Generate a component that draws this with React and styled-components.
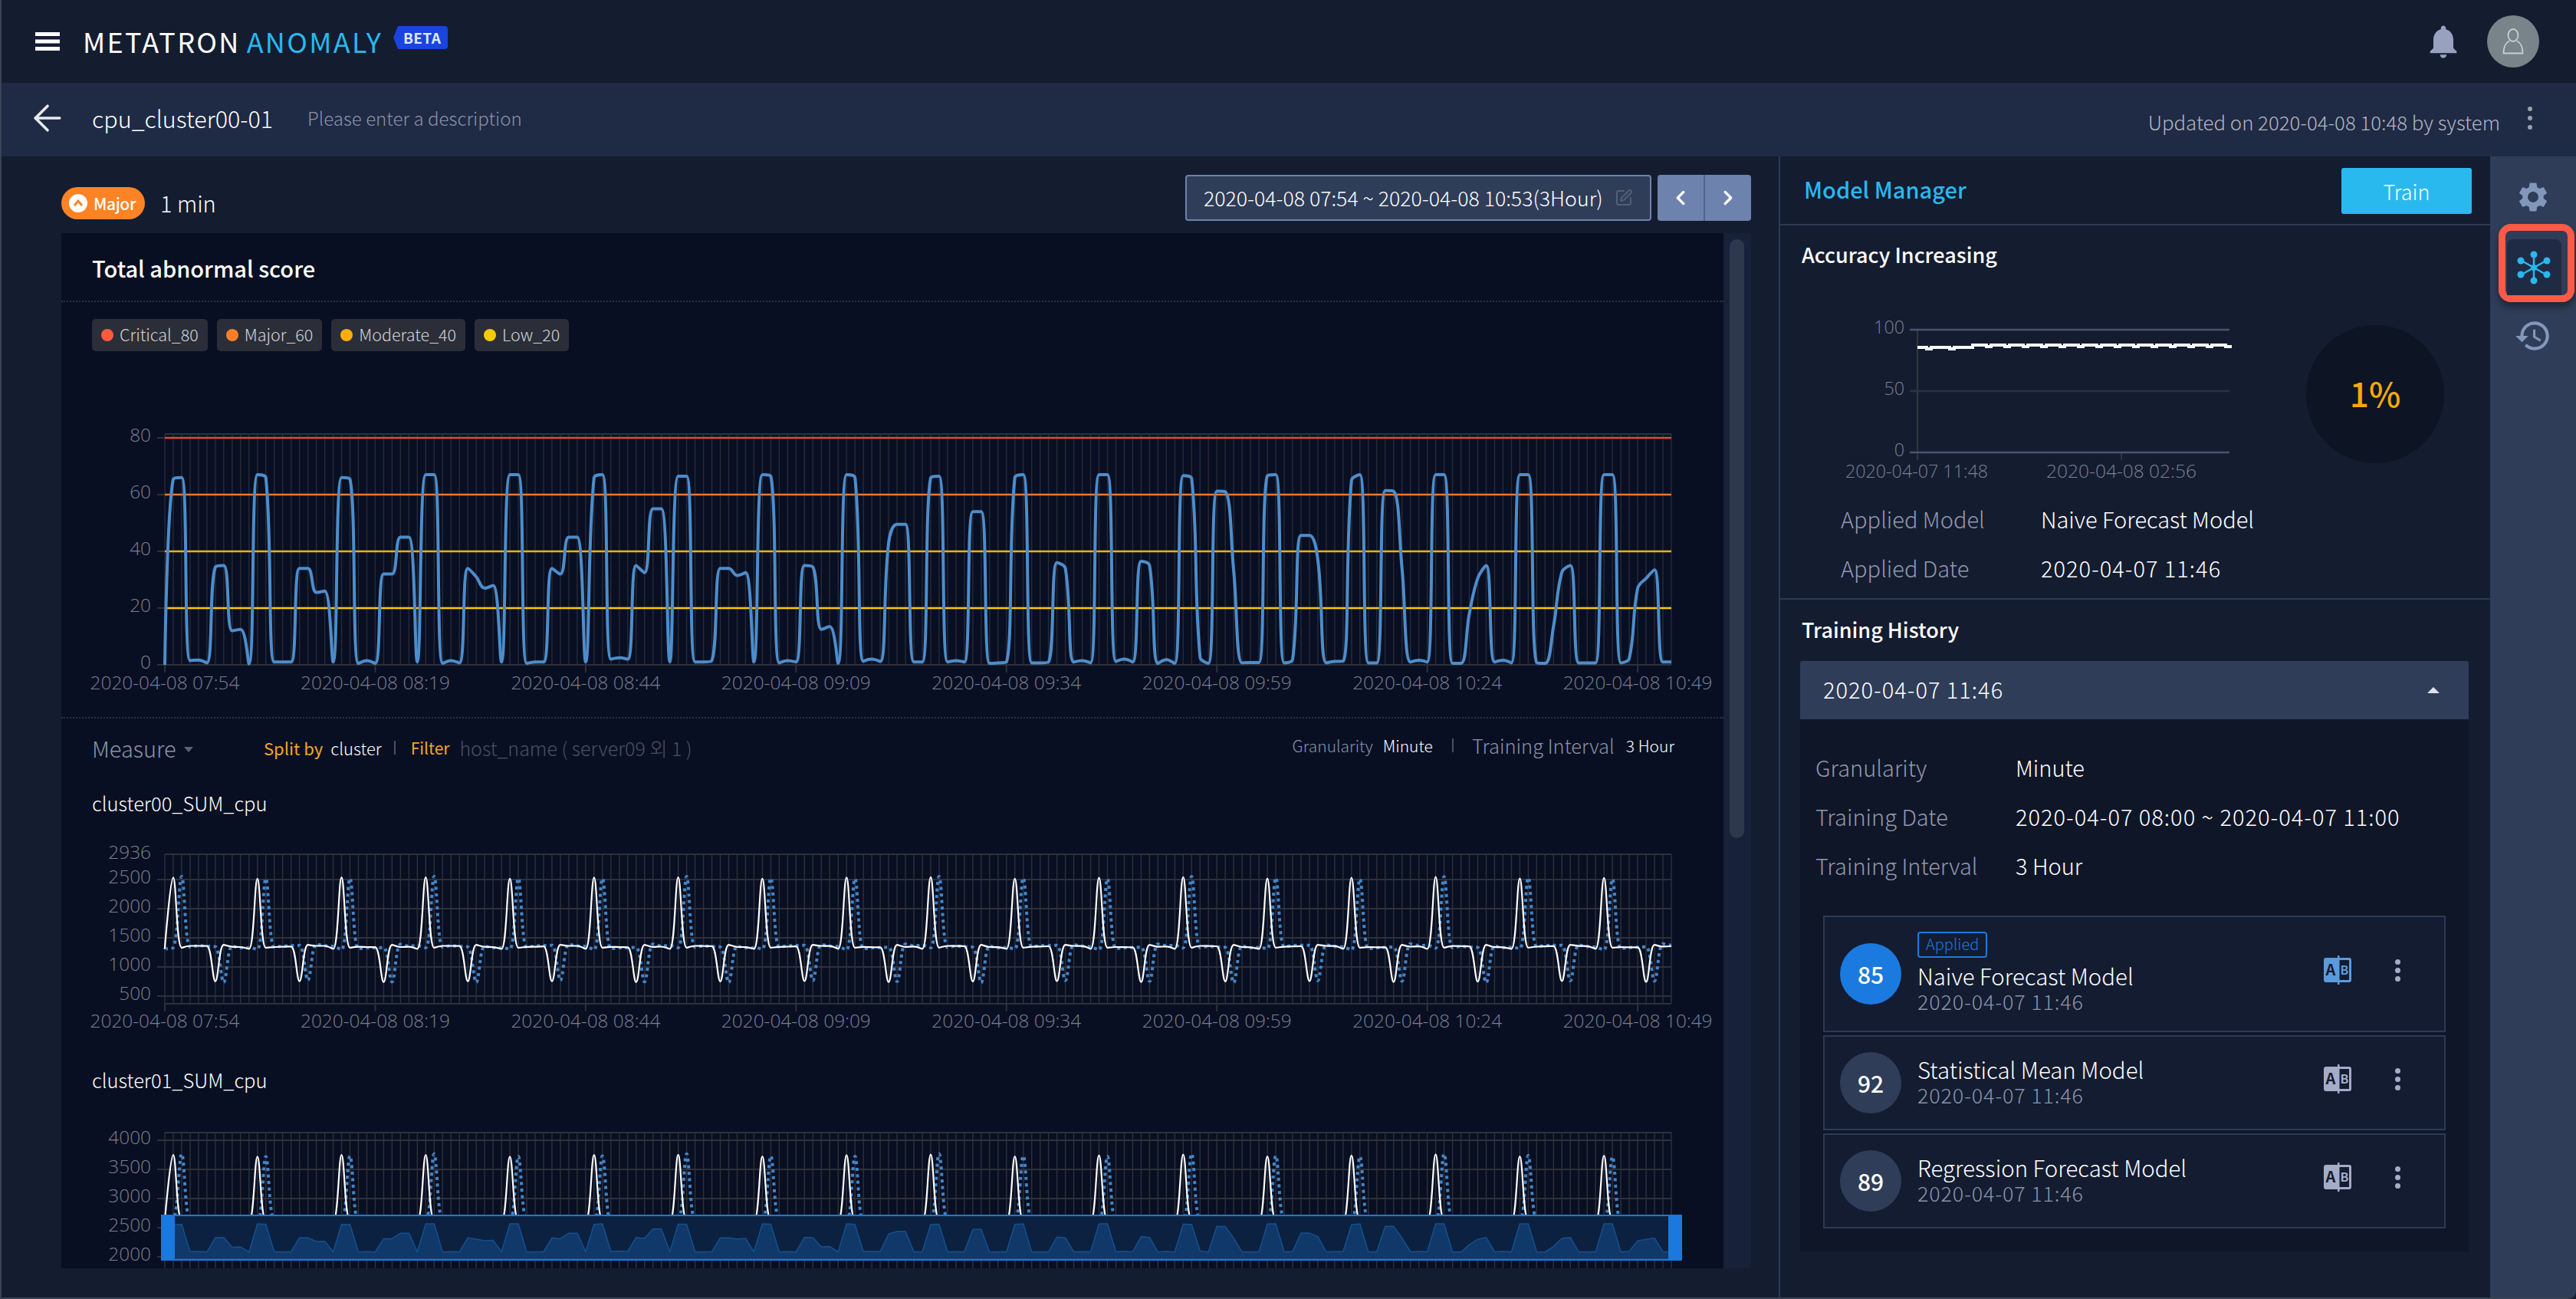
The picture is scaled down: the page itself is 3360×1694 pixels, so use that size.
import React from 'react';
import styled, { createGlobalStyle } from 'styled-components';
import { ArrowLeft, ChevronLeft, ChevronRight, SquarePen } from 'lucide-react';
import { MdHistory, MdNotifications, MdSettings } from 'react-icons/md';

const FONT = '"Noto Sans CJK KR", "Noto Sans", sans-serif';
const AXIS_FONT = '"Open Sans", "Noto Sans", sans-serif';

const SCORE = [
  0, 65.5, 66, 1.5, 1.7, 0.7, 34.5, 35, 12, 12.5,
  0.3, 67, 66, 1, 1, 1, 34, 34, 25.5, 26,
  1, 66, 65.5, 0.5, 1.5, 0.5, 32, 32, 45, 45,
  1, 67, 67, 0.5, 1.5, 0.7, 34, 31, 27, 28,
  1, 67, 67, 0.5, 1, 1, 34, 32, 45, 45,
  1, 66, 67, 2, 2.5, 2, 35, 32.5, 55, 55,
  1, 66.5, 66.5, 1, 1, 1.5, 34, 34, 31.5, 32.5,
  1, 67, 66.5, 0.7, 1.5, 1, 35, 34.5, 12.5, 13.5,
  0.5, 67, 66, 1.3, 2, 1.2, 43, 49.5, 49.5, 1,
  1, 66, 66.5, 1, 1.5, 1, 54, 54, 0.5, 0.7,
  1, 66, 67, 0.7, 0.7, 1, 36, 34, 1, 1.5,
  0.7, 67, 67, 1.2, 2, 1, 36.5, 35, 0.5, 1.8,
  0.5, 66.7, 65.7, 2.7, 0.5, 61.2, 61, 33, 0.7, 0.8,
  0.8, 66.7, 67, 0.7, 1.8, 45.6, 45.6, 37, 0.7, 1.2,
  1.3, 65, 67, 0.7, 0.7, 61.4, 61.2, 34, 1, 1.6,
  1, 67, 67, 0.5, 0.5, 18, 30.5, 35, 1, 1.6,
  0.7, 67, 67, 0.7, 0.5, 13.5, 32.7, 35, 0.7, 0.7,
  0.7, 67, 67, 0.7, 2.2, 27, 30.5, 33.5, 1, 1,
];

const STEP = 1965 / 179;
const AXIS_X = 135;
const TICKS = [0, 25, 50, 75, 100, 125, 150, 175];
const TICK_NAMES = ['07:54', '08:19', '08:44', '09:09', '09:34', '09:59', '10:24', '10:49'];

// same bezier construction the chart library uses for smooth lines
const smoothPath = (pts, smooth = 0.5) => {
  let d = `M${pts[0][0]} ${pts[0][1]}`;
  let cp0 = pts[0];
  for (let i = 1; i < pts.length; i++) {
    const [x, y] = pts[i];
    const [px, py] = pts[i - 1];
    const [nx, ny] = pts[i + 1] || pts[i];
    let cp1x = x;
    let cp1y = y;
    let nc = [x, y];
    if (i < pts.length - 1) {
      const prevLen = Math.hypot(x - px, y - py);
      const nextLen = Math.hypot(nx - x, ny - y);
      const ratio = nextLen / (nextLen + prevLen);
      let ncx = x + (nx - px) * smooth * ratio;
      let ncy = y + (ny - py) * smooth * ratio;
      ncx = Math.max(Math.min(ncx, Math.max(nx, x)), Math.min(nx, x));
      ncy = Math.max(Math.min(ncy, Math.max(ny, y)), Math.min(ny, y));
      cp1x = x - (ncx - x) * (prevLen / nextLen);
      cp1y = y - (ncy - y) * (prevLen / nextLen);
      cp1x = Math.max(Math.min(cp1x, Math.max(px, x)), Math.min(px, x));
      cp1y = Math.max(Math.min(cp1y, Math.max(py, y)), Math.min(py, y));
      ncx = x + (x - cp1x) * (nextLen / prevLen);
      ncy = y + (y - cp1y) * (nextLen / prevLen);
      nc = [ncx, ncy];
    }
    d += `C${cp0[0].toFixed(1)} ${cp0[1].toFixed(1)} ${cp1x.toFixed(1)} ${cp1y.toFixed(1)} ${x.toFixed(1)} ${y.toFixed(1)}`;
    cp0 = nc;
  }
  return d;
};

const wiggle = (i, amp) => Math.sin(i * 12.9898) * amp;

// one period of the measure series, repeated with a small jitter
const measureSeries = (peak, low, base, jitter) =>
  Array.from({ length: 180 }, (_, i) => {
    const k = i % 10;
    if (k === 1) return peak + wiggle(i, jitter);
    if (k === 6) return low + wiggle(i, jitter * 0.6);
    if (k === 2) return base - 20;
    if (k === 0) return base - 40;
    if (k === 7) return base + 30;
    return base + wiggle(i, 12);
  });

const shifted = (series, jitter) =>
  series.map((_, i) => (i === 0 ? series[0] : series[i - 1] + wiggle(i + 3, jitter)));

const GlobalStyle = createGlobalStyle`
  html, body {
    margin: 0;
    padding: 0;
    background: #141c30;
  }
  * {
    box-sizing: border-box;
  }
`;

const Frame = styled.div`
  width: 3360px;
  height: 1694px;
  display: flex;
  flex-direction: column;
  overflow: hidden;
  background: #141c30;
  color: #fff;
  font-family: ${FONT};
  border-left: 2px solid #3a4356;
  border-bottom: 2px solid #3a4356;
  border-bottom-right-radius: 10px;
`;

const TopBar = styled.header`
  flex: none;
  height: 108px;
  display: flex;
  align-items: center;
  padding: 0 48px 0 44px;
`;

const Brand = styled.div`
  display: flex;
  align-items: center;
  margin: 0 0 3px 30px;
  font-size: 36px;
  line-height: 44px;
  letter-spacing: 2.3px;
`;

const BrandAccent = styled.span`
  color: #29b8ee;
  margin-left: 8px;
`;

const BetaTag = styled.span`
  display: flex;
  align-items: center;
  justify-content: center;
  width: 71px;
  height: 30px;
  margin: -7px 0 0 14px;
  padding-left: 4px;
  background: #1a44e0;
  border-radius: 4px;
  color: #dfe6ff;
  font-size: 19px;
  font-weight: 700;
  letter-spacing: 0.4px;
  line-height: 30px;
  clip-path: polygon(6px 0, 100% 0, 100% 100%, 6px 100%, 0 50%);
`;

const TopActions = styled.div`
  margin-left: auto;
  display: flex;
  align-items: center;
  gap: 31px;
  color: #98a1bd;
`;

const Avatar = styled.div`
  width: 68px;
  height: 68px;
  border-radius: 50%;
  background: #78848a;
  display: flex;
  align-items: center;
  justify-content: center;
`;

const SubBar = styled.div`
  flex: none;
  height: 96px;
  display: flex;
  align-items: center;
  padding: 0 57px 4px 33px;
  background: #1f2a44;
`;

const AssetName = styled.span`
  margin-left: 31px;
  font-size: 30.5px;
  line-height: 40px;
  font-weight: 300;
`;

const AssetDesc = styled.span`
  margin-left: 45px;
  font-size: 24.1px;
  line-height: 36px;
  font-weight: 300;
  color: #8a93ab;
`;

const Updated = styled.span`
  margin-left: auto;
  margin-top: 10px;
  font-size: 25.8px;
  line-height: 36px;
  font-weight: 300;
  color: #b2b6c1;
`;

const Kebab = styled.span`
  display: flex;
  flex-direction: column;
  gap: ${(p) => p.$gap || 6}px;
  margin-left: ${(p) => p.$left || 0}px;
  i {
    width: ${(p) => p.$dot || 6}px;
    height: ${(p) => p.$dot || 6}px;
    border-radius: 50%;
    background: ${(p) => p.$color || '#9aa0ac'};
  }
`;

const Body = styled.div`
  flex: 1;
  min-height: 0;
  display: flex;
`;

const LeftPane = styled.main`
  flex: none;
  width: 2318px;
  display: flex;
  flex-direction: column;
  padding: 0 36px 38px 78px;
`;

const StatusRow = styled.div`
  flex: none;
  height: 100px;
  display: flex;
  align-items: flex-start;
`;

const Severity = styled.span`
  display: flex;
  align-items: center;
  gap: 8px;
  width: 109px;
  height: 42px;
  margin-top: 40px;
  padding: 0 10px;
  border-radius: 21px;
  background: #fd8324;
  font-size: 21px;
  font-weight: 500;
  letter-spacing: -0.4px;
  line-height: 42px;
`;

const SeverityDot = styled.span`
  width: 24px;
  height: 24px;
  border-radius: 50%;
  background: #fff;
  display: flex;
  align-items: center;
  justify-content: center;
`;

const Interval = styled.span`
  margin: 40px 0 0 20px;
  font-size: 29px;
  line-height: 40px;
  font-weight: 300;
`;

const RangeBox = styled.div`
  margin: 24px 0 0 auto;
  width: 608px;
  height: 60px;
  display: flex;
  align-items: center;
  justify-content: space-between;
  padding: 0 22px;
  background: #2f3d59;
  border: 2px solid #6d82ad;
  border-radius: 4px;
  font-size: 26.7px;
  line-height: 36px;
  font-weight: 300;
  color: #555f75;
  span {
    color: #fff;
  }
`;

const NavGroup = styled.div`
  margin: 24px 0 0 8px;
  width: 122px;
  height: 60px;
  display: flex;
  border-radius: 4px;
  overflow: hidden;
  background: #6d82ad;
`;

const NavButton = styled.button`
  flex: 1;
  padding: 0;
  display: flex;
  align-items: center;
  justify-content: center;
  border: 0;
  background: transparent;
  color: #fff;
  & + & {
    border-left: 2px solid #4e6390;
  }
`;

const ChartArea = styled.div`
  flex: 1;
  min-height: 0;
  display: flex;
`;

const ScrollBody = styled.div`
  position: relative;
  width: 2168px;
  overflow: hidden;
  background: #090f22;
`;

const ScrollTrack = styled.div`
  width: 36px;
  padding: 8px;
  background: #17213a;
`;

const ScrollThumb = styled.div`
  height: 781px;
  width: 19px;
  border-radius: 10px;
  background: #2e384d;
`;

const PanelHead = styled.div`
  height: 90px;
  display: flex;
  align-items: center;
  padding: 2px 0 0 40px;
  border-bottom: 2px dotted #2c3346;
  font-size: 29px;
  line-height: 40px;
  font-weight: 500;
`;

const Legend = styled.div`
  display: flex;
  gap: 12px;
  padding: 22px 0 0 40px;
`;

const Chip = styled.span`
  display: flex;
  align-items: center;
  gap: 8px;
  height: 42px;
  padding: 0 12px 2px;
  border-radius: 5px;
  background: #2b2e38;
  color: #d2d4da;
  font-size: 21.5px;
  line-height: 40px;
  font-weight: 300;
  &::before {
    content: '';
    width: 16px;
    height: 16px;
    margin-top: 2px;
    border-radius: 50%;
    background: ${(p) => p.$color};
  }
`;

const ChartSvg = styled.svg`
  display: block;
`;

const AxisText = styled.text`
  font-family: ${AXIS_FONT};
  font-size: ${(p) => p.$size || 24.4}px;
  font-weight: 300;
  fill: #7a8092;
`;

const MeasureBar = styled.div`
  height: 84px;
  display: flex;
  align-items: center;
  padding: 0 64px 6px 40px;
  border-top: 2px dotted #2c3346;
`;

const MeasureName = styled.span`
  display: flex;
  align-items: center;
  gap: 10px;
  width: 224px;
  font-size: 29px;
  line-height: 40px;
  font-weight: 300;
  color: #8a93ab;
  &::after {
    content: '';
    margin-top: 5px;
    border: 6px solid transparent;
    border-top: 7px solid #5a6379;
    border-bottom: 0;
  }
`;

const MetaText = styled.span`
  font-size: ${(p) => p.$size || 22}px;
  line-height: 36px;
  font-weight: ${(p) => (p.$strong ? 400 : 300)};
  color: ${(p) => p.$color || '#fff'};
  margin-left: ${(p) => p.$left || 0}px;
`;

const MetaBar = styled.span`
  width: 2px;
  height: 18px;
  margin-left: ${(p) => p.$left}px;
  background: #4a5068;
`;

const MetaRight = styled.div`
  margin: 0 0 6px auto;
  display: flex;
  align-items: center;
`;

const ClusterTitle = styled.div`
  height: 56px;
  padding: 8px 0 0 40px;
  font-size: 25.5px;
  line-height: 40px;
  font-weight: 300;
`;

const ZoomSlider = styled.div`
  position: absolute;
  left: 130px;
  bottom: 10px;
  width: 1984px;
  height: 60px;
  display: flex;
  border-top: 2px solid #1a78de;
  border-bottom: 2px solid #1a78de;
  background: #0c2140;
`;

const SliderHandle = styled.span`
  flex: none;
  width: 18px;
  margin: -2px 0;
  background: #1a78de;
`;

const RightPanel = styled.aside`
  flex: none;
  width: 928px;
  display: flex;
  flex-direction: column;
  border-left: 2px solid #2c3a57;
`;

const ManagerHead = styled.div`
  flex: none;
  height: 90px;
  display: flex;
  align-items: center;
  justify-content: space-between;
  padding: 0 24px 0 31px;
  border-bottom: 2px solid #2c3a57;
`;

const ManagerTitle = styled.span`
  margin-bottom: 4px;
  color: #29b8ee;
  font-size: 29px;
  line-height: 40px;
  font-weight: 500;
`;

const TrainButton = styled.button`
  width: 170px;
  height: 60px;
  margin-top: 2px;
  border: 0;
  border-radius: 3px;
  background: #29b9ef;
  color: #fff;
  font-family: ${FONT};
  font-size: 27px;
  font-weight: 300;
`;

const SectionTitle = styled.div`
  flex: none;
  height: ${(p) => p.$height}px;
  padding: ${(p) => p.$top}px 0 0 28px;
  font-size: 27px;
  line-height: 40px;
  font-weight: 500;
`;

const AccuracyRow = styled.div`
  flex: none;
  height: 268px;
  display: flex;
  align-items: flex-start;
`;

const Gauge = styled.div`
  margin: 52px 0 0 36px;
  width: 180px;
  height: 180px;
  padding-bottom: 4px;
  border-radius: 50%;
  background: #0d1423;
  display: flex;
  align-items: center;
  justify-content: center;
  color: #f7a808;
  font-size: 44px;
  font-weight: 500;
`;

const InfoRows = styled.div`
  flex: none;
  height: 142px;
  padding: 6px 0 0 79px;
  border-bottom: 2px solid #2c3a57;
`;

const InfoRow = styled.div`
  height: ${(p) => p.$height || 64}px;
  display: flex;
  align-items: center;
  padding-bottom: 5px;
  font-size: 29px;
  font-weight: 300;
  line-height: 40px;
`;

const InfoLabel = styled.span`
  width: ${(p) => p.$width}px;
  color: #9298ae;
`;

const DateValue = styled.span`
  letter-spacing: 1px;
`;

const SelectHead = styled.div`
  flex: none;
  margin: 0 28px 0 26px;
  height: 76px;
  display: flex;
  align-items: center;
  justify-content: space-between;
  padding: 0 38px 5px 30px;
  border-radius: 3px 3px 0 0;
  background: #2f3d59;
  font-size: 29px;
  line-height: 40px;
  font-weight: 300;
  &::after {
    content: '';
    margin-top: 5px;
    border: 8px solid transparent;
    border-top: 0;
    border-bottom: 8px solid #dfe2ea;
  }
`;

const SelectBody = styled.div`
  flex: none;
  height: 694px;
  margin: 0 28px 0 26px;
  padding: 32px 30px 0 20px;
  background: #0f1628;
`;

const CardList = styled.div`
  display: flex;
  flex-direction: column;
  gap: 4px;
  margin: 32px 0 0 10px;
`;

const Card = styled.div`
  height: ${(p) => (p.$tall ? 152 : 124)}px;
  display: flex;
  align-items: center;
  padding: 0 57px 0 20px;
  background: #131c30;
  border: 2px solid #2c3a57;
`;

const ScoreBall = styled.div`
  flex: none;
  width: 80px;
  height: 80px;
  border-radius: 50%;
  display: flex;
  align-items: center;
  justify-content: center;
  background: ${(p) => (p.$active ? '#1a7ae0' : '#2f3d59')};
  font-size: 30px;
  font-weight: 500;
`;

const CardText = styled.div`
  margin: -3px 0 0 21px;
  display: flex;
  flex-direction: column;
  align-items: flex-start;
`;

const AppliedChip = styled.span`
  height: 34px;
  margin-bottom: 7px;
  padding: 0 9px;
  border: 2px solid #1a7ae0;
  border-radius: 4px;
  color: #1a7ae0;
  font-size: 20px;
  line-height: 28px;
  font-weight: 300;
`;

const ModelName = styled.span`
  font-size: 29.4px;
  line-height: 33px;
  font-weight: 300;
`;

const ModelDate = styled.span`
  font-size: 27px;
  line-height: 33px;
  font-weight: 300;
  letter-spacing: 0.8px;
  color: #8a93ab;
`;

const CardActions = styled.div`
  margin-left: auto;
  padding-bottom: 10px;
  display: flex;
  align-items: center;
  gap: 57px;
`;

const SideRail = styled.nav`
  flex: none;
  width: 112px;
  display: flex;
  flex-direction: column;
  align-items: flex-start;
  padding: 26px 0 0 11px;
  background: #2f3d59;
  color: #8397bb;
`;

const RailIcon = styled.div`
  width: 90px;
  height: ${(p) => p.$height}px;
  padding-bottom: ${(p) => p.$lift || 0}px;
  display: flex;
  align-items: center;
  justify-content: center;
`;

const RailHighlight = styled.div`
  width: 99px;
  height: 102px;
  padding: 11px 8px 0 2px;
  border: 9px solid #ff5a48;
  border-radius: 16px;
  box-shadow: 0 6px 10px rgba(0, 0, 0, 0.4);
`;

const RailActive = styled.div`
  height: 100%;
  padding-right: 2px;
  border-radius: 8px 8px 0 0;
  background: #1f2a44;
  display: flex;
  align-items: center;
  justify-content: center;
`;

const HamburgerIcon = () => (
  <svg width="32" height="24" viewBox="0 0 32 24">
    <path d="M0 0h32v5H0zM0 9.5h32v5H0zM0 19h32v5H0z" fill="#fff" />
  </svg>
);

const UserIcon = () => (
  <svg width="28" height="34" viewBox="0 0 28 34" fill="none" stroke="#c8ced2" strokeWidth="1.8">
    <ellipse cx="14" cy="9" rx="6.5" ry="8" />
    <path d="M9 16.5C4 19 1.5 24 1.5 32.5h25C26.5 24 24 19 19 16.5" />
  </svg>
);

const NetworkIcon = () => (
  <svg width="44" height="44" viewBox="0 0 44 44" fill="#29b8ee" stroke="#29b8ee">
    <path d="M22 4v36M6 13l32 18M38 13L6 31" strokeWidth="2.4" />
    <circle cx="22" cy="22" r="4" stroke="none" />
    <circle cx="22" cy="5" r="4.5" stroke="none" />
    <circle cx="22" cy="39" r="4.5" stroke="none" />
    <circle cx="5" cy="13" r="4.5" stroke="none" />
    <circle cx="39" cy="13" r="4.5" stroke="none" />
    <circle cx="5" cy="31" r="4.5" stroke="none" />
    <circle cx="39" cy="31" r="4.5" stroke="none" />
  </svg>
);

const AbIcon = ({ color }) => (
  <svg width="36" height="38" viewBox="0 0 36 38">
    <rect x="0" y="3" width="36" height="32" rx="3" fill={color} />
    <rect x="20" y="6" width="13" height="26" fill="#131c30" />
    <rect x="18" y="0" width="2.5" height="38" fill={color} />
    <text x="9" y="26" textAnchor="middle" fontSize="20" fontWeight="700" fontFamily={FONT} fill="#131c30">A</text>
    <text x="27" y="25" textAnchor="middle" fontSize="16" fontWeight="700" fontFamily={FONT} fill={color}>B</text>
  </svg>
);

const Grid = ({ width = 2168, gridTop, floor, bottom, ticks, labelY, gridColor = '#2f3139', verticalColor }) => (
  <g>
    {Array.from({ length: 180 }, (_, i) => (
      <line key={i} x1={AXIS_X + i * STEP} x2={AXIS_X + i * STEP} y1={gridTop} y2={bottom} stroke={verticalColor || gridColor} strokeWidth="1.4" />
    ))}
    <line x1={AXIS_X} x2={width - 68} y1={gridTop} y2={gridTop} stroke={gridColor} strokeWidth="2" />
    {ticks.map(([label, y]) => (
      <g key={label}>
        <line x1={AXIS_X - 10} x2={width - 68} y1={y} y2={y} stroke={gridColor} strokeWidth="2" />
        <AxisText x={AXIS_X - 18} y={y + 5} textAnchor="end">{label}</AxisText>
      </g>
    ))}
    {labelY &&
      TICKS.map((t, i) => (
        <g key={t}>
          <line x1={AXIS_X + t * STEP} x2={AXIS_X + t * STEP} y1={floor} y2={floor + 10} stroke={gridColor} strokeWidth="2" />
          <AxisText x={AXIS_X + t * STEP} y={labelY} textAnchor="middle">{`2020-04-08 ${TICK_NAMES[i]}`}</AxisText>
        </g>
      ))}
  </g>
);

const Series = ({ data, toY, color, width, dash, smooth }) => (
  <path
    d={smoothPath(data.map((v, i) => [AXIS_X + i * STEP, toY(v)]), smooth)}
    fill="none"
    stroke={color}
    strokeWidth={width}
    strokeDasharray={dash}
  />
);

const ScoreChart = () => {
  const toY = (v) => 409 - v * 3.7;
  const lines = [
    [80, '#e0483a'],
    [60, '#f0762a'],
    [40, '#fcae0a'],
    [20, '#fdc900'],
  ];
  return (
    <ChartSvg width="2168" height="477">
      <Grid
        gridTop={108}
        floor={409}
        bottom={409}
        labelY={441}
        verticalColor="#282b36"
        ticks={[80, 60, 40, 20, 0].map((v) => [v, toY(v)])}
      />
      {lines.map(([v, c]) => (
        <line key={v} x1={AXIS_X} x2={2100} y1={toY(v)} y2={toY(v)} stroke={c} strokeWidth="2.4" />
      ))}
      <Series data={SCORE} toY={toY} color="#4d8dcb" width={4} smooth={0.4} />
    </ChartSvg>
  );
};

const cpuA = measureSeries(2530, 750, 1350, 15);
const cpuABlue = shifted(cpuA, 20);
const cpuB = measureSeries(3740, 2000, 2650, 20);
const cpuBBlue = shifted(cpuB, 20);

const MeasureChartA = () => {
  const toY = (v) => 186 - (v - 1000) * 0.076;
  return (
    <ChartSvg width="2168" height="305">
      <Grid
        gridTop={39}
        floor={234}
        bottom={234}
        labelY={265}
        ticks={[2500, 2000, 1500, 1000, 500].map((v) => [v, toY(v)])}
      />
      <AxisText x={AXIS_X - 18} y={45} textAnchor="end">2936</AxisText>
      <line x1={AXIS_X} x2={2100} y1={234} y2={234} stroke="#2f3139" strokeWidth="2" />
      <Series data={cpuABlue} toY={toY} color="#4285c8" width={4} dash="4 4.5" smooth={0.35} />
      <Series data={cpuA} toY={toY} color="#fff" width={2.2} smooth={0.35} />
    </ChartSvg>
  );
};

const MeasureChartB = () => {
  const toY = (v) => 203 - (v - 2000) * 0.076;
  return (
    <ChartSvg width="2168" height="218">
      <Grid
        gridTop={41}
        bottom={218}
        ticks={[4000, 3500, 3000, 2500, 2000].map((v) => [v, toY(v)])}
      />
      <Series data={cpuBBlue} toY={toY} color="#4285c8" width={4} dash="4 4.5" smooth={0.35} />
      <Series data={cpuB} toY={toY} color="#fff" width={2.2} smooth={0.35} />
    </ChartSvg>
  );
};

// overview area of the score series inside the range slider
const SliderArea = () => {
  const toY = (v) => 47 - v * 0.55;
  const pts = SCORE.map((v, i) => `${(i * STEP - 13).toFixed(1)},${toY(v).toFixed(1)}`);
  return (
    <ChartSvg width="1948" height="56">
      <polygon points={`-13,56 ${pts.join(' ')} 1960,56`} fill="#103869" stroke="#14508f" strokeWidth="1.5" />
    </ChartSvg>
  );
};

const AccuracyChart = () => {
  // accuracy stays near 85: a thick stepped line, a little lower at the start
  let line = 'M179 81';
  for (let i = 1; i <= 68; i++) {
    const x = 179 + i * 6;
    const y = i < 12 ? 81 + (i % 5 === 2 ? 2 : 0) : 78 + ((i * 7) % 4 === 1 ? 2 : 0);
    line += `H${x}V${y}`;
  }
  return (
    <ChartSvg width="650" height="268">
      <line x1="179" x2="179" y1="58" y2="228" stroke="#33363e" strokeWidth="2" />
      <line x1="445" x2="445" y1="218" y2="228" stroke="#33363e" strokeWidth="2" />
      {[
        ['100', 58, '#4b5270'],
        ['50', 138, '#2b3348'],
        ['0', 218, '#4b5270'],
      ].map(([label, y, c]) => (
        <g key={label}>
          <line x1="169" x2="586" y1={y} y2={y} stroke={c} strokeWidth="2.4" />
          <AxisText x="162" y={y + 5} textAnchor="end" $size={23.3}>{label}</AxisText>
        </g>
      ))}
      <path d={line} fill="none" stroke="#fff" strokeWidth="4" />
      <AxisText x="178" y="251" textAnchor="middle" $size={23.3}>2020-04-07 11:48</AxisText>
      <AxisText x="445" y="251" textAnchor="middle" $size={24.5}>2020-04-08 02:56</AxisText>
    </ChartSvg>
  );
};

const MODELS = [
  { score: 85, name: 'Naive Forecast Model', applied: true },
  { score: 92, name: 'Statistical Mean Model' },
  { score: 89, name: 'Regression Forecast Model' },
];

const LEGEND = [
  ['Critical_80', '#ff5a3c'],
  ['Major_60', '#fd7e28'],
  ['Moderate_40', '#ffad0a'],
  ['Low_20', '#f5cb00'],
];

const dots = (
  <>
    <i />
    <i />
    <i />
  </>
);

export default function App() {
  return (
    <>
      <GlobalStyle />
      <Frame>
        <TopBar>
          <HamburgerIcon />
          <Brand>
            METATRON<BrandAccent>ANOMALY</BrandAccent>
            <BetaTag>BETA</BetaTag>
          </Brand>
          <TopActions>
            <MdNotifications size={52} />
            <Avatar>
              <UserIcon />
            </Avatar>
          </TopActions>
        </TopBar>
        <SubBar>
          <ArrowLeft size={54} strokeWidth={1.6} color="#e8eaee" />
          <AssetName>cpu_cluster00-01</AssetName>
          <AssetDesc>Please enter a description</AssetDesc>
          <Updated>Updated on 2020-04-08 10:48 by system</Updated>
          <Kebab $left={36}>{dots}</Kebab>
        </SubBar>
        <Body>
          <LeftPane>
            <StatusRow>
              <Severity>
                <SeverityDot>
                  <svg width="14" height="14" viewBox="0 0 14 14" fill="none" stroke="#fd8324" strokeWidth="3">
                    <path d="M2 10l5-6 5 6" />
                  </svg>
                </SeverityDot>
                Major
              </Severity>
              <Interval>1 min</Interval>
              <RangeBox>
                <span>2020-04-08 07:54 ~ 2020-04-08 10:53(3Hour)</span>
                <SquarePen size={24} />
              </RangeBox>
              <NavGroup>
                <NavButton>
                  <ChevronLeft size={30} strokeWidth={2.6} />
                </NavButton>
                <NavButton>
                  <ChevronRight size={30} strokeWidth={2.6} />
                </NavButton>
              </NavGroup>
            </StatusRow>
            <ChartArea>
              <ScrollBody>
                <PanelHead>Total abnormal score</PanelHead>
                <Legend>
                  {LEGEND.map(([label, color]) => (
                    <Chip key={label} $color={color}>{label}</Chip>
                  ))}
                </Legend>
                <ScoreChart />
                <MeasureBar>
                  <MeasureName>Measure</MeasureName>
                  <MetaText $strong $color="#f4a425">Split by</MetaText>
                  <MetaText $left={10}>cluster</MetaText>
                  <MetaBar $left={16} />
                  <MetaText $left={20} $size={21} $strong $color="#f4a425">Filter</MetaText>
                  <MetaText $left={13} $size={25} $color="#4a5068">host_name ( server09 외 1 )</MetaText>
                  <MetaRight>
                    <MetaText $size={21} $color="#8a93ab">Granularity</MetaText>
                    <MetaText $left={13} $size={21}>Minute</MetaText>
                    <MetaBar $left={25} />
                    <MetaText $left={24} $size={25.5} $color="#8a93ab">Training Interval</MetaText>
                    <MetaText $left={15} $size={21}>3 Hour</MetaText>
                  </MetaRight>
                </MeasureBar>
                <ClusterTitle>cluster00_SUM_cpu</ClusterTitle>
                <MeasureChartA />
                <ClusterTitle>cluster01_SUM_cpu</ClusterTitle>
                <MeasureChartB />
                <ZoomSlider>
                  <SliderHandle />
                  <SliderArea />
                  <SliderHandle />
                </ZoomSlider>
              </ScrollBody>
              <ScrollTrack>
                <ScrollThumb />
              </ScrollTrack>
            </ChartArea>
          </LeftPane>
          <RightPanel>
            <ManagerHead>
              <ManagerTitle>Model Manager</ManagerTitle>
              <TrainButton>Train</TrainButton>
            </ManagerHead>
            <SectionTitle $height={78} $top={18}>Accuracy Increasing</SectionTitle>
            <AccuracyRow>
              <AccuracyChart />
              <Gauge>1%</Gauge>
            </AccuracyRow>
            <InfoRows>
              <InfoRow>
                <InfoLabel $width={261}>Applied Model</InfoLabel>
                Naive Forecast Model
              </InfoRow>
              <InfoRow>
                <InfoLabel $width={261}>Applied Date</InfoLabel>
                <DateValue>2020-04-07 11:46</DateValue>
              </InfoRow>
            </InfoRows>
            <SectionTitle $height={80} $top={19}>Training History</SectionTitle>
            <SelectHead><DateValue>2020-04-07 11:46</DateValue></SelectHead>
            <SelectBody>
              <InfoRow>
                <InfoLabel $width={261}>Granularity</InfoLabel>
                Minute
              </InfoRow>
              <InfoRow>
                <InfoLabel $width={261}>Training Date</InfoLabel>
                <DateValue>2020-04-07 08:00 ~ 2020-04-07 11:00</DateValue>
              </InfoRow>
              <InfoRow>
                <InfoLabel $width={261}>Training Interval</InfoLabel>
                3 Hour
              </InfoRow>
              <CardList>
                {MODELS.map((m) => (
                  <Card key={m.name} $tall={m.applied}>
                    <ScoreBall $active={m.applied}>{m.score}</ScoreBall>
                    <CardText>
                      {m.applied && <AppliedChip>Applied</AppliedChip>}
                      <ModelName>{m.name}</ModelName>
                      <ModelDate>2020-04-07 11:46</ModelDate>
                    </CardText>
                    <CardActions>
                      <AbIcon color={m.applied ? '#5b9bdc' : '#a4acc8'} />
                      <Kebab $dot={7} $gap={4} $color="#a4acc8">{dots}</Kebab>
                    </CardActions>
                  </Card>
                ))}
              </CardList>
            </SelectBody>
          </RightPanel>
          <SideRail>
            <RailIcon $height={62} $lift={8}>
              <MdSettings size={46} />
            </RailIcon>
            <RailHighlight>
              <RailActive>
                <NetworkIcon />
              </RailActive>
            </RailHighlight>
            <RailIcon $height={88}>
              <MdHistory size={50} />
            </RailIcon>
          </SideRail>
        </Body>
      </Frame>
    </>
  );
}
